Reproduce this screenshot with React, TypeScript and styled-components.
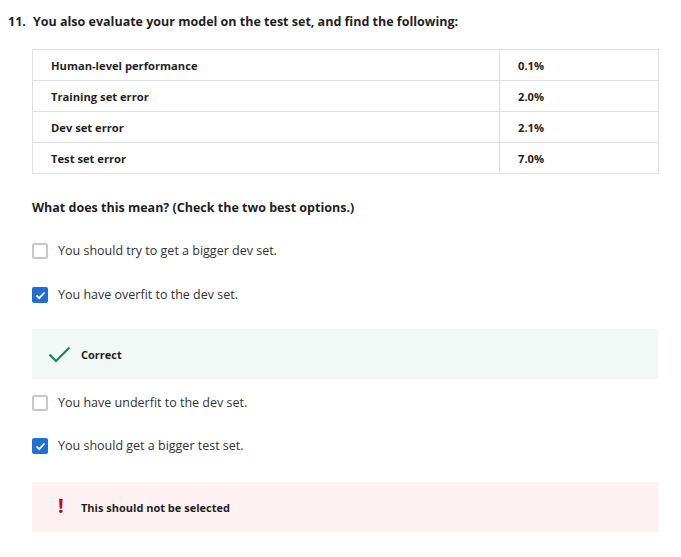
import React from "react";
import styled, { createGlobalStyle } from "styled-components";

const Global = createGlobalStyle`
  html, body { margin: 0; padding: 0; background: #fff; }
  body { font-family: "Open Sans", "Noto Sans", sans-serif; color: #1f1f1f; }
`;

const Page = styled.div`
  padding: 12px 23px 0 8px;
`;

const Heading = styled.div`
  display: flex;
  font-size: 12.5px;
  font-weight: 700;
  line-height: 20px;
  color: #1f1f1f;
`;

const Num = styled.span`
  width: 25px;
  flex: none;
`;

const Body = styled.div`
  padding-left: 24px;
`;

const Table = styled.table`
  margin-top: 17px;
  width: 627px;
  border-collapse: collapse;
  font-size: 11.2px;
  font-weight: 700;
  color: #1f1f1f;
`;

const Td = styled.td<{ $w?: number }>`
  border: 1px solid #e1e1e1;
  height: 31px;
  padding: 0 0 0 18px;
  box-sizing: border-box;
  width: ${(p) => (p.$w ? `${p.$w}px` : "auto")};
`;

const Question = styled.div`
  margin-top: 24px;
  font-size: 12.5px;
  font-weight: 700;
  line-height: 20px;
`;

const OptionRow = styled.label<{ $mt: number }>`
  display: flex;
  align-items: center;
  gap: 10px;
  font-size: 12.5px;
  line-height: 20px;
  color: #333;
  margin-top: ${(p) => p.$mt}px;
`;

const Box = styled.span<{ $checked?: boolean }>`
  width: 16px;
  height: 16px;
  box-sizing: border-box;
  border-radius: 2px;
  flex: none;
  display: flex;
  align-items: center;
  justify-content: center;
  background: ${(p) => (p.$checked ? "#1f6fd1" : "#fff")};
  border: ${(p) => (p.$checked ? "none" : "2px solid #c8c8c8")};
`;

const Feedback = styled.div<{ $kind: "ok" | "bad"; $mt: number }>`
  margin-top: ${(p) => p.$mt}px;
  width: 626px;
  height: 50px;
  display: flex;
  align-items: center;
  background: ${(p) => (p.$kind === "ok" ? "#f2f8f6" : "#fdf1f1")};
  font-size: 11px;
  font-weight: 700;
  color: #1f1f1f;
`;

const IconSlot = styled.span`
  width: 49px;
  padding-left: 16px;
  box-sizing: border-box;
  flex: none;
  display: flex;
  align-items: center;
`;

const Bang = styled.span`
  color: #d30000;
  font-size: 20px;
  font-weight: 700;
  line-height: 20px;
  margin-left: 10px;
  margin-top: -2px;
`;

const Check = () => (
  <svg width="11" height="9" viewBox="0 0 11 9">
    <path d="M1.5 4.5 L4.2 7.2 L9.5 1.5" fill="none" stroke="#fff" strokeWidth="1.8" />
  </svg>
);

const Option = ({ text, checked, mt }: { text: string; checked?: boolean; mt: number }) => (
  <OptionRow $mt={mt}>
    <Box $checked={checked}>{checked && <Check />}</Box>
    <span>{text}</span>
  </OptionRow>
);

const rows = [
  ["Human-level performance", "0.1%"],
  ["Training set error", "2.0%"],
  ["Dev set error", "2.1%"],
  ["Test set error", "7.0%"],
];

export default function App() {
  return (
    <Page>
      <Global />
      <Heading>
        <Num>11.</Num>
        <span>You also evaluate your model on the test set, and find the following:</span>
      </Heading>
      <Body>
        <Table>
          <tbody>
            {rows.map(([a, b]) => (
              <tr key={a}>
                <Td $w={467}>{a}</Td>
                <Td>{b}</Td>
              </tr>
            ))}
          </tbody>
        </Table>
        <Question>What does this mean? (Check the two best options.)</Question>
        <Option mt={23} text="You should try to get a bigger dev set." />
        <Option mt={24} checked text="You have overfit to the dev set." />
        <Feedback $kind="ok" $mt={24}>
          <IconSlot>
            <svg width="23" height="17" viewBox="0 0 23 17">
              <path d="M1.5 8.5 L8 15 L21.5 1.5" fill="none" stroke="#1f8354" strokeWidth="2.2" />
            </svg>
          </IconSlot>
          <span>Correct</span>
        </Feedback>
        <Option mt={14} text="You have underfit to the dev set." />
        <Option mt={23} checked text="You should get a bigger test set." />
        <Feedback $kind="bad" $mt={26}>
          <IconSlot>
            <Bang>!</Bang>
          </IconSlot>
          <span>This should not be selected</span>
        </Feedback>
      </Body>
    </Page>
  );
}
